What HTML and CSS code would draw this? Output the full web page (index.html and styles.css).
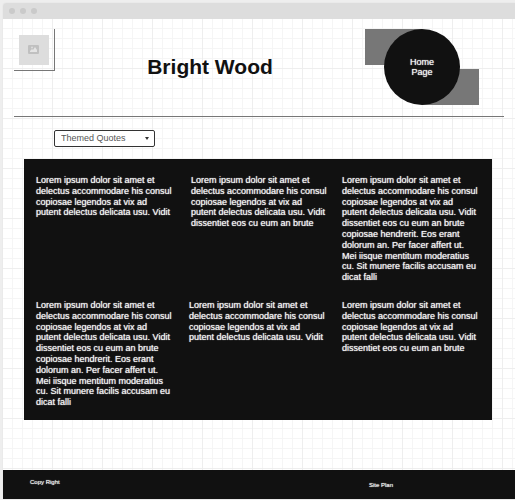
FILE: index.html
```html
<!DOCTYPE html>
<html lang="en">
<head>
<meta charset="utf-8">
<title>Bright Wood</title>
<link rel="stylesheet" href="styles.css">
</head>
<body>
<div class="window">
  <div class="titlebar"><span class="dot"></span><span class="dot"></span><span class="dot"></span></div>
  <header class="header">
    <div class="logo">
      <svg class="logo-image" viewBox="0 0 30 30" aria-hidden="true">
        <rect width="30" height="30" fill="#dddddd"/>
        <rect x="9" y="10" width="11" height="9" rx="1" fill="#c0c0c0"/>
        <path d="M11 17V16L13 14L14 15L16 12L18 15V17Z" fill="#e4e4e4"/>
        <circle cx="13" cy="12.500" r="1" fill="#dcdcdc"/>
      </svg>
    </div>
    <h1 class="title">Bright Wood</h1>
    <a class="home" href="#"><span class="home-circle">Home<br>Page</span></a>
  </header>
  <main class="main">
    <div class="picker">
      <select class="select" aria-label="Quotes"><option>Themed Quotes</option></select>
      <svg class="arrow" viewBox="0 0 4 3" aria-hidden="true"><path d="M0 0H4L2 3Z" fill="#333333"/></svg>
    </div>
    <section class="quotes">
      <div class="row row-first">
        <p>Lorem ipsum dolor sit amet et<br>delectus accommodare his consul<br>copiosae legendos at vix ad<br>putent delectus delicata usu. Vidit</p>
        <p>Lorem ipsum dolor sit amet et<br>delectus accommodare his consul<br>copiosae legendos at vix ad<br>putent delectus delicata usu. Vidit<br>dissentiet eos cu eum an brute</p>
        <p>Lorem ipsum dolor sit amet et<br>delectus accommodare his consul<br>copiosae legendos at vix ad<br>putent delectus delicata usu. Vidit<br>dissentiet eos cu eum an brute<br>copiosae hendrerit. Eos erant<br>dolorum an. Per facer affert ut.<br>Mei iisque mentitum moderatius<br>cu. Sit munere facilis accusam eu<br>dicat falli</p>
      </div>
      <div class="row">
        <p>Lorem ipsum dolor sit amet et<br>delectus accommodare his consul<br>copiosae legendos at vix ad<br>putent delectus delicata usu. Vidit<br>dissentiet eos cu eum an brute<br>copiosae hendrerit. Eos erant<br>dolorum an. Per facer affert ut.<br>Mei iisque mentitum moderatius<br>cu. Sit munere facilis accusam eu<br>dicat falli</p>
        <p>Lorem ipsum dolor sit amet et<br>delectus accommodare his consul<br>copiosae legendos at vix ad<br>putent delectus delicata usu. Vidit</p>
        <p>Lorem ipsum dolor sit amet et<br>delectus accommodare his consul<br>copiosae legendos at vix ad<br>putent delectus delicata usu. Vidit<br>dissentiet eos cu eum an brute</p>
      </div>
    </section>
  </main>
  <footer class="footer">
    <span>Copy Right</span>
    <a class="plan" href="#">Site Plan</a>
  </footer>
</div>
</body>
</html>
```
FILE: styles.css
```css
* {
  box-sizing: border-box;
}

body {
  margin: 0;
  min-height: 100vh;
  padding: 3px 0 1px 3px;
  display: flex;
  background: #eeeeee;
  color: #111111;
  font: 9px/1.2 "Liberation Sans", Arial, sans-serif;
}

.window {
  flex: 1;
  display: flex;
  flex-direction: column;
  border-top-left-radius: 3px;
  overflow: hidden;
  background-color: #ffffff;
  background-image:
    linear-gradient(to right, #eeeeee 1px, transparent 1px),
    linear-gradient(#eeeeee 1px, transparent 1px),
    linear-gradient(to right, #f5f5f5 1px, transparent 1px),
    linear-gradient(#f5f5f5 1px, transparent 1px);
  background-size: 50px 50px, 50px 50px, 10px 10px, 10px 10px;
  background-position: 49px 15px, 49px 15px, 9px 5px, 9px 5px;
  box-shadow: 0 0 1px #cccccc;
}

.titlebar {
  display: flex;
  align-items: center;
  gap: 5px;
  height: 16px;
  padding-left: 6px;
  background: #dddddd;
}

.dot {
  width: 6px;
  height: 6px;
  border-radius: 50%;
  background: #cacaca;
}

.header {
  display: grid;
  grid-template-columns: 41px 1fr 114px;
  align-items: start;
  margin: 0 11px;
  padding: 10px 25px 11px 0;
  border-bottom: 1px solid #777777;
}

.logo {
  padding: 6px 5px 5px;
  border-right: 1px solid #777777;
  border-bottom: 1px solid #777777;
}

.logo-image {
  display: block;
  width: 30px;
  height: 30px;
}

.title {
  align-self: center;
  margin: 0;
  font-size: 21px;
  line-height: 24px;
  text-align: center;
}

.home {
  display: flex;
  justify-content: center;
  background:
    linear-gradient(#777777, #777777) left top / 57px 36px no-repeat,
    linear-gradient(#777777, #777777) right bottom / 57px 36px no-repeat;
  color: #f4f4f4;
  text-align: center;
  text-decoration: none;
  line-height: 10px;
}

.home-circle {
  width: 76px;
  height: 76px;
  padding-top: 28px;
  border-radius: 50%;
  background: #111111;
  text-shadow: 0 0 1px #f4f4f4;
}

.main {
  padding: 13px 23px 50px 21px;
}

.picker {
  position: relative;
  width: 101px;
  margin: 0 0 12px 30px;
}

.select {
  display: block;
  width: 100%;
  height: 17px;
  padding: 0 6px;
  border: 1px solid #333333;
  border-radius: 2px;
  background: #ffffff;
  color: #555555;
  font: inherit;
  appearance: none;
}

.arrow {
  position: absolute;
  right: 6px;
  top: 7px;
  width: 4px;
  height: 3px;
  pointer-events: none;
}

.quotes {
  display: grid;
  gap: 17px;
  padding: 16px 12px 12px;
  background: #111111;
  color: #f4f4f4;
  text-shadow: 0 0 1px #f4f4f4;
}

.row {
  display: grid;
  grid-template-columns: 153fr 153fr 138fr;
  white-space: nowrap;
}

.row-first {
  grid-template-columns: 155fr 151fr 138fr;
}

.row p {
  margin: 0;
}

.footer {
  flex: 1;
  display: grid;
  grid-template-columns: 339fr 146fr;
  align-items: start;
  padding: 8px 0 0 27px;
  background: #111111;
  color: #f4f4f4;
  font-size: 6px;
  line-height: 8px;
  text-shadow: 0 0 1px #f4f4f4;
}

.plan {
  margin-top: 3px;
  color: inherit;
  text-decoration: none;
}
```
